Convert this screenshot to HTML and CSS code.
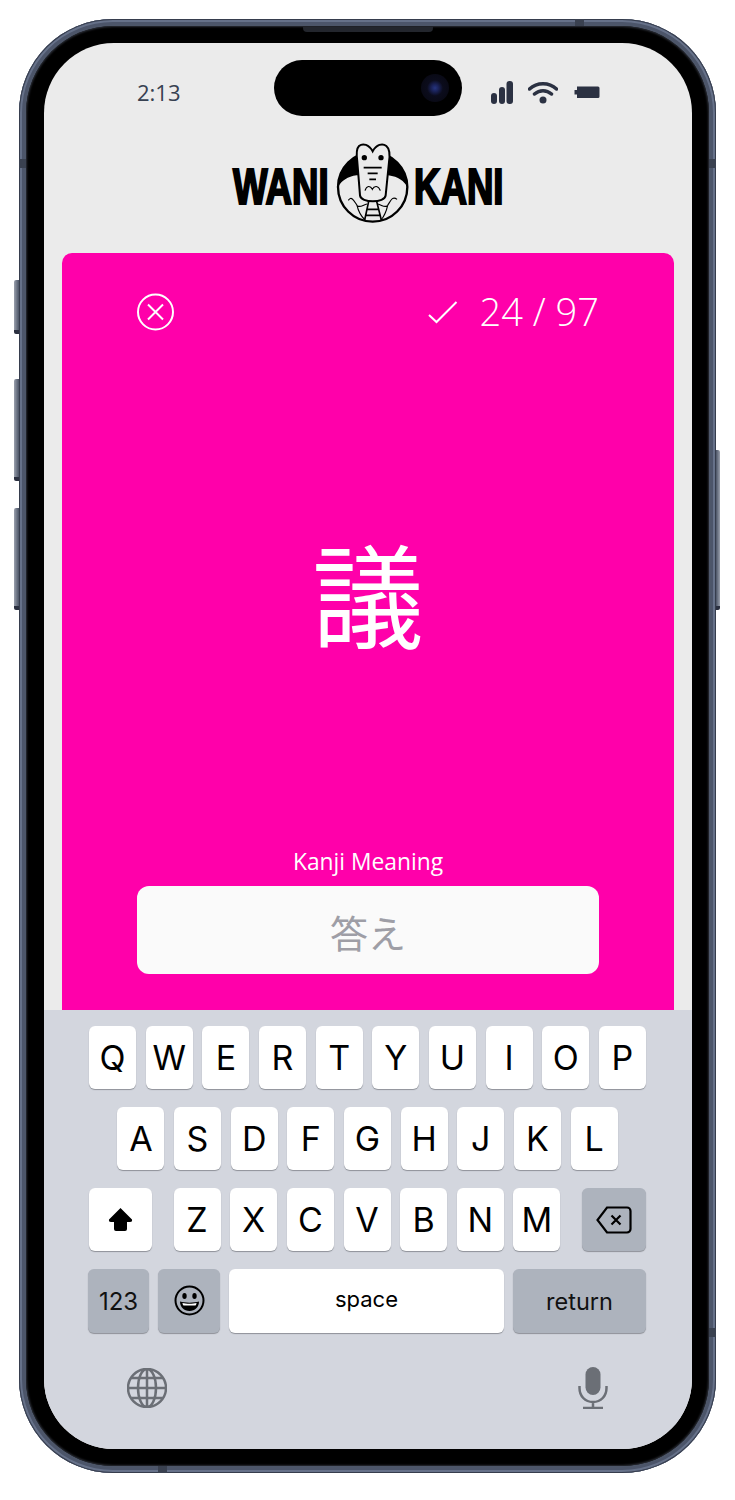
FILE: index.html
```html
<!DOCTYPE html>
<html lang="en">
<head>
<meta charset="utf-8">
<title>WaniKani</title>
<link rel="stylesheet" href="styles.css">
</head>
<body>
<div class="phone">
  <span class="side side-a"></span>
  <span class="side side-b"></span>
  <span class="side side-c"></span>
  <span class="side side-d"></span>
  <span class="band band-t"></span>
  <span class="band band-b"></span>
  <span class="band band-l"></span>
  <span class="band band-r1"></span>
  <span class="band band-r2"></span>
  <span class="speaker"></span>
  <div class="bezel">
    <div class="screen">
      <div class="status">
        <div class="time">2:13</div>
        <div class="island"><span class="camera"></span></div>
        <div class="status-icons">
          <svg class="ic-signal" width="22" height="23" viewBox="0 0 22 23"><rect x="0" y="12" width="6" height="11" rx="3"/><rect x="8" y="6" width="6" height="17" rx="3"/><rect x="15.500" y="0" width="6.500" height="23" rx="3"/></svg>
          <svg class="ic-wifi" width="30" height="23" viewBox="0 0 30 23"><path d="M1.500 8C9 1 21 1 28.500 8M6.500 13C11.500 8.500 18.500 8.500 23.500 13" fill="none" stroke-width="3.500" stroke-linecap="round"/><circle cx="15" cy="19" r="3.500" stroke="none"/></svg>
          <svg class="ic-batt" width="26" height="14" viewBox="0 0 26 14"><path d="M3 1.500H24a1.500 1.500 0 0 1 1.500 1.500V11.500a1.500 1.500 0 0 1-1.500 1.500H3V9.500H.5V5H3Z"/></svg>
        </div>
      </div>
      <div class="logo">
        <div class="word word-w">WANI</div>
        <svg class="gator" width="78" height="84" viewBox="0 0 234 252">
          <circle cx="113" cy="135" r="104" fill="none" stroke="#000" stroke-width="7"/>
          <path d="M9 135A104 104 0 0 1 217 135C208 118 190 104 160 100H65C38 104 20 116 9 135Z"/>
          <path class="g-head" d="M75 160L67 60C64 40 62 22 72 12C84 2 102 8 113 28C124 8 142 2 154 12C166 22 165 40 162 60L152 160C150 184 77 184 75 160Z"/>
          <circle cx="88" cy="47" r="8"/><circle cx="138" cy="47" r="8"/>
          <path class="g-line" d="M86 77H140M98 94H128M103 112H123"/>
          <path class="g-thin" d="M90 146C95 130 106 130 112 142C118 130 130 130 136 146"/>
          <path class="g-line" d="M101 178L89 234M125 178L139 234M96 202H130M92 220H135"/>
          <path class="g-thin" d="M40 175C50 160 58 178 66 190C74 200 84 188 96 186M186 172C172 160 166 178 158 190C150 200 140 188 128 186M66 190C70 208 78 222 90 234M158 190C154 208 148 222 138 234"/>
        </svg>
        <div class="word word-k">KANI</div>
      </div>
      <main class="card">
        <div class="card-top">
          <svg class="close" width="38" height="38" viewBox="0 0 38 38"><circle cx="18.500" cy="19" r="17.500"/><path d="M11 11.500L26 26.500M26 11.500L11 26.500"/></svg>
          <div class="count">
            <svg class="check" width="32" height="26" viewBox="0 0 32 26"><path d="M3 15L10.500 22L30.500 2"/></svg>
            <span class="count-text">24 / 97</span>
          </div>
        </div>
        <div class="kanji">議</div>
        <div class="label">Kanji Meaning</div>
        <div class="answer">答え</div>
      </main>
      <div class="keyboard">
        <div class="row">
          <span class="key">Q</span><span class="key">W</span><span class="key">E</span><span class="key">R</span><span class="key">T</span><span class="key">Y</span><span class="key">U</span><span class="key">I</span><span class="key">O</span><span class="key">P</span>
        </div>
        <div class="row">
          <span class="key">A</span><span class="key">S</span><span class="key">D</span><span class="key">F</span><span class="key">G</span><span class="key">H</span><span class="key">J</span><span class="key">K</span><span class="key">L</span>
        </div>
        <div class="row row-3">
          <span class="key key-wide">
            <svg width="25" height="25" viewBox="0 0 25 25"><path d="M12.500 1L24 12.500Q24.500 15 22 15H19V22Q19 24 17 24H8Q6 24 6 22V15H3Q.5 15 1 12.500Z"/></svg>
          </span>
          <div class="letters">
            <span class="key">Z</span><span class="key">X</span><span class="key">C</span><span class="key">V</span><span class="key">B</span><span class="key">N</span><span class="key">M</span>
          </div>
          <span class="key key-del key-dark">
            <svg class="del" width="36" height="28" viewBox="0 0 36 28"><path d="M11 1.500H31a3.500 3.500 0 0 1 3.500 3.500V23a3.500 3.500 0 0 1-3.500 3.500H11L1.500 14Z"/><path d="M15.500 9.500L24.500 18.500M24.500 9.500L15.500 18.500"/></svg>
          </span>
        </div>
        <div class="row row-4">
          <span class="key key-dark key-num">123</span>
          <span class="key key-dark key-emoji">
            <svg width="31" height="31" viewBox="0 0 31 31"><circle class="e-face" cx="15.500" cy="15.500" r="14"/><ellipse cx="10.500" cy="11" rx="2.200" ry="3"/><ellipse cx="20.500" cy="11" rx="2.200" ry="3"/><path d="M6 16.500C11 18 20 18 25 16.500C25 22 21 26 15.500 26C10 26 6 22 6 16.500Z"/><path class="e-teeth" d="M8.500 18C12 19 19 19 22.500 18C22.500 19 22 20 21.500 20.500H9.500C9 20 8.500 19 8.500 18Z"/></svg>
          </span>
          <span class="key key-space">space</span>
          <span class="key key-dark key-return">return</span>
        </div>
        <div class="tools">
          <svg class="globe" width="40" height="40" viewBox="0 0 40 40"><circle cx="20" cy="20" r="19"/><ellipse cx="20" cy="20" rx="9" ry="19"/><path d="M20 1V39M1 20H39M4.500 10H35.500M4.500 30H35.500"/></svg>
          <svg class="mic" width="30" height="42" viewBox="0 0 30 42"><rect class="m-body" x="7.500" y="0" width="15" height="28" rx="7.500"/><path d="M1.500 19V21C1.500 29 7 35 15 35C23 35 28.500 29 28.500 21V19M15 35V41M5 41H25"/></svg>
        </div>
      </div>
    </div>
  </div>
</div>
</body>
</html>
```

FILE: styles.css
```css
* { box-sizing: border-box; }

html, body {
  margin: 0;
  background: #fff;
}

body {
  width: 735px;
  height: 1500px;
  padding: 19px 19px 0;
  overflow: hidden;
  font-family: "Open Sans", "Noto Sans", "Noto Sans CJK JP", sans-serif;
}

.phone {
  position: relative;
  width: 697px;
  height: 1454px;
  padding: 7px;
  border-radius: 94px;
  background: #4d5669;
  box-shadow: inset 0 0 0 1px #363d4d, inset 0 0 0 3px #667189, inset 0 0 0 5px #4c556a;
}

.side {
  position: absolute;
  width: 5px;
  background: linear-gradient(90deg, #9aa0ad, #4a5365);
  border-bottom: 4px solid #2b3040;
  border-radius: 2px 0 0 2px;
}
.side-a { left: -5px; top: 261px; height: 54px; }
.side-b { left: -5px; top: 360px; height: 102px; }
.side-c { left: -5px; top: 489px; height: 102px; }
.side-d { right: -4px; top: 431px; width: 4px; height: 160px; background: linear-gradient(90deg, #4a5365, #9aa0ad); border-radius: 0 2px 2px 0; }

.band { position: absolute; background: #3a4150; }
.band-t { left: 556px; top: 0; width: 9px; height: 7px; }
.band-b { left: 139px; bottom: 0; width: 9px; height: 7px; }
.band-l { left: 0; top: 140px; width: 7px; height: 9px; }
.band-r1 { right: 0; top: 140px; width: 7px; height: 9px; }
.band-r2 { right: 0; top: 1309px; width: 7px; height: 9px; }

.speaker {
  position: absolute;
  left: 284px;
  top: 8px;
  width: 130px;
  height: 5px;
  border-radius: 0 0 4px 4px;
  background: #23262d;
  z-index: 1;
}

.bezel {
  height: 100%;
  padding: 17px 17px 17px 18px;
  border-radius: 87px;
  background: #000;
  box-shadow: inset 0 0 2px 1px #2a2d35;
}

.screen {
  display: flex;
  flex-direction: column;
  height: 100%;
  overflow: hidden;
  border-radius: 70px;
  background: #ebebeb;
}

.status {
  display: flex;
  flex: none;
  height: 56px;
  margin-top: 17px;
}

.time {
  width: 230px;
  padding: 17px 0 0 93px;
  font-size: 22px;
  line-height: 30px;
  color: #374151;
}

.island {
  display: flex;
  align-items: center;
  justify-content: flex-end;
  width: 188px;
  padding-right: 13px;
  border-radius: 28px;
  background: #000;
}

.camera {
  width: 28px;
  height: 28px;
  border-radius: 50%;
  background: radial-gradient(circle, #26357f 0, #1a2258 18%, #0b0c1c 40%, #07070f 100%);
}

.status-icons {
  display: flex;
  align-items: flex-start;
  padding: 21px 0 0 29px;
  fill: #2b3142;
  stroke: #2b3142;
}
.status-icons svg { flex: none; }
.ic-signal { stroke: none; }
.ic-wifi { margin-left: 15px; }
.ic-batt { margin: 4px 0 0 16px; stroke: none; }

.logo {
  display: flex;
  flex: none;
  justify-content: center;
  align-items: center;
  height: 84px;
  margin-top: 26px;
}

.word {
  height: 40px;
  margin-top: 5px;
  font-family: "Liberation Sans", sans-serif;
  font-size: 49.500px;
  font-weight: 700;
  line-height: 40px;
  white-space: nowrap;
  color: #000;
  -webkit-text-stroke: 2.200px #000;
  transform-origin: left center;
}
.word-w { width: 97px; margin-left: 1px; transform: scaleX(.74); }
.word-k { width: 90px; transform: scaleX(.74); }

.gator { flex: none; margin: 0 1px 0 5px; }
.g-head { fill: #ebebeb; stroke: #000; stroke-width: 6; }
.g-line { fill: none; stroke: #000; stroke-width: 5; }
.g-thin { fill: none; stroke: #000; stroke-width: 3.500; }

.card {
  display: flex;
  flex: 1;
  flex-direction: column;
  min-height: 0;
  margin: 27px 18px 0;
  padding: 40px 75px 36px;
  border-radius: 10px 10px 0 0;
  background: #ff00aa;
  color: #fff;
}

.card-top {
  display: flex;
  flex: none;
  justify-content: space-between;
  align-items: center;
  height: 38px;
}

.close { fill: none; stroke: #fff; stroke-width: 2; }

.count {
  display: flex;
  align-items: center;
  gap: 22px;
  font-size: 38px;
  font-weight: 300;
  line-height: 36px;
}

.count-text { margin-bottom: 3px; }

.check { fill: none; stroke: #fff; stroke-width: 2; margin-top: 2px; }

.kanji {
  display: flex;
  flex: 1;
  justify-content: center;
  align-items: center;
  font-family: "Noto Sans CJK JP", sans-serif;
  font-size: 112px;
  line-height: 1;
}

.label {
  flex: none;
  height: 24px;
  margin-bottom: 12px;
  font-size: 22.800px;
  line-height: 24px;
  text-align: center;
}

.answer {
  flex: none;
  height: 88px;
  border-radius: 12px;
  background: #fafafa;
  font-family: "Noto Sans CJK JP", sans-serif;
  font-size: 38px;
  line-height: 92px;
  text-align: center;
  color: #9e9ea6;
}

.keyboard {
  display: flex;
  flex: none;
  flex-direction: column;
  height: 439px;
  padding: 16px 46px 0 45px;
  background: #d3d6de;
}

.row {
  display: flex;
  justify-content: center;
  gap: 9.670px;
  height: 63px;
  margin-bottom: 18px;
}

.key {
  display: flex;
  flex: none;
  justify-content: center;
  align-items: center;
  width: 47px;
  border-radius: 6px;
  background: #fff;
  box-shadow: 0 1px 1px #8e9198;
  font-family: Inter, "Liberation Sans", sans-serif;
  font-size: 34px;
  font-weight: 375;
  color: #000;
}

.row-3 { justify-content: space-between; gap: 0; }
.letters { display: flex; gap: 9.670px; }
.key-wide { width: 63px; }
.key-del { width: 64px; }
.key-dark { background: #adb3bd; }
.del { fill: none; stroke: #000; stroke-width: 2.200; }

.row-4 {
  gap: 9px;
  justify-content: flex-start;
  margin-left: -1px;
  height: 64px;
  margin-bottom: 0;
}
.key-num { width: 61px; font-size: 24px; font-weight: 400; color: #111; }
.key-emoji { width: 62px; padding-bottom: 2px; }
.e-face { fill: none; stroke: #000; stroke-width: 2; }
.e-teeth { fill: #fff; }
.key-space { width: 275px; padding-bottom: 4px; font-size: 22px; font-weight: 400; }
.key-return { width: 133px; font-size: 23.500px; font-weight: 400; color: #111; }

.tools {
  display: flex;
  flex: none;
  justify-content: space-between;
  align-items: center;
  height: 42px;
  margin-top: 34px;
  padding: 0 38px;
}
.globe { fill: none; stroke: #6b6f76; stroke-width: 2.500; }
.mic { fill: none; stroke: #6b6f76; stroke-width: 2.500; }
.m-body { fill: #6b6f76; stroke: none; }
```
